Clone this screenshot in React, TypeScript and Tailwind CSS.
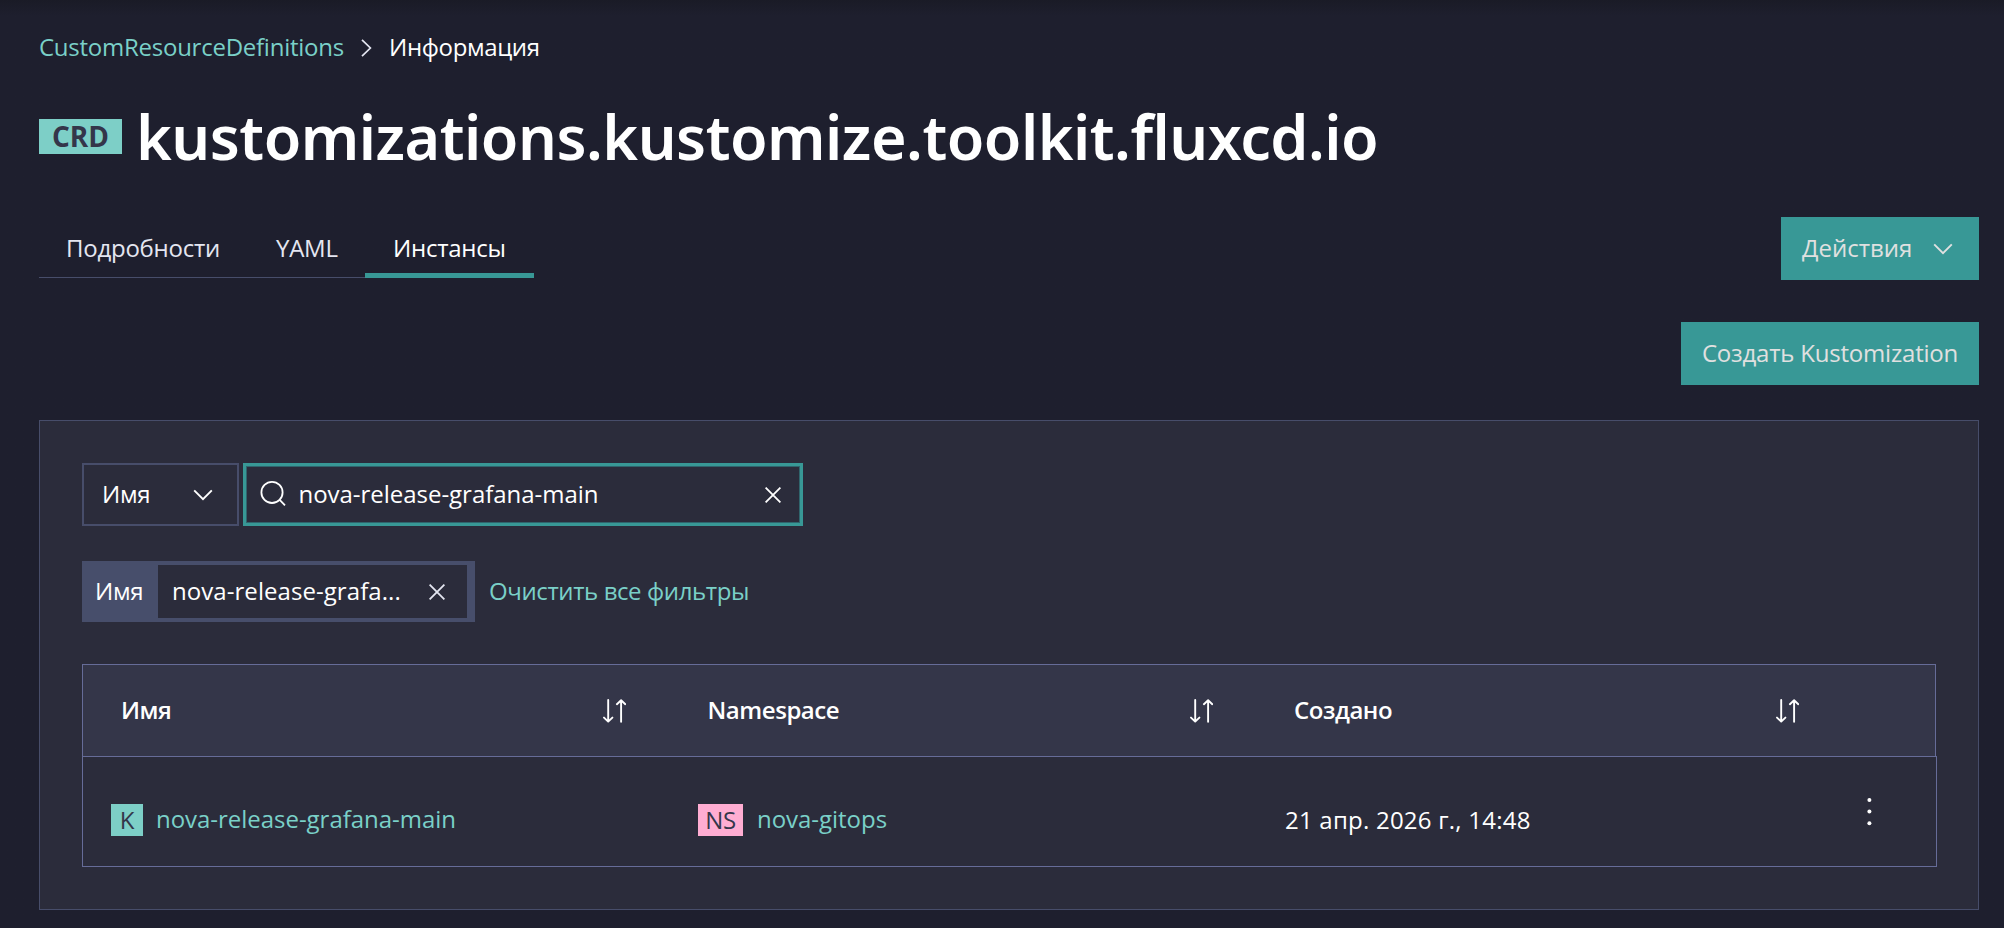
import type { ReactNode } from "react";

function Chevron({ className = "" }: { className?: string }) {
  return (
    <svg className={`shrink-0 ${className}`} width="20" height="12" viewBox="0 0 20 12" fill="none" stroke="currentColor" strokeWidth="1.9">
      <path d="M1.2 1.4 10 10.2 18.8 1.4" />
    </svg>
  );
}

function Close({ className = "" }: { className?: string }) {
  return (
    <svg className={`shrink-0 ${className}`} width="16" height="16" viewBox="0 0 16 16" fill="none" stroke="currentColor" strokeWidth="1.8">
      <path d="M.6.6 15.4 15.4M15.4.6.6 15.4" />
    </svg>
  );
}

function SortIcon() {
  return (
    <svg className="mt-px shrink-0" width="23" height="24" viewBox="0 0 23 24" fill="none" stroke="currentColor" strokeWidth="1.9" strokeLinecap="round" strokeLinejoin="round">
      <path d="M5.2 1V22.4M1 18.6 5.2 22.6 9.4 18.6" />
      <path d="M18.1 22.8V1.4M13.9 5.2 18.1 1.2 22.3 5.2" />
    </svg>
  );
}

function HeaderCell({ children }: { children: ReactNode }) {
  return (
    <div className="flex w-[586.5px] items-center justify-between pr-[43.5px] pb-px pl-[38px]">
      <span className="h-8 font-semibold leading-8 tracking-[-0.45px]">{children}</span>
      <SortIcon />
    </div>
  );
}

export default function App() {
  return (
    <div className="h-[928px] w-[2004px] overflow-hidden bg-[#1e1f2e] bg-linear-to-b from-[#1a1b26] to-[#1e1f2e] to-[16px] pt-[31px] pr-[25px] pl-[39px] font-['Open_Sans','Noto_Sans',sans-serif] text-[24px] leading-8 tracking-[-0.25px] whitespace-nowrap text-white">
      <nav className="flex h-8">
        <a className="w-[322px] text-[#7ad0c8]">CustomResourceDefinitions</a>
        <svg className="mt-[8px] mr-[17px]" width="11" height="18" viewBox="0 0 11 18" fill="none" stroke="#e4e6f1" strokeWidth="1.7">
          <path d="M1 .8 9.4 9 1 17.2" />
        </svg>
        <span className="tracking-[-0.35px]">Информация</span>
      </nav>

      <header className="mt-[34px] flex h-20">
        <span className="mt-[22px] flex h-[35px] w-[83px] items-center justify-center bg-[#7dcfc7] pb-[2px] text-[28px] font-bold tracking-[0px] text-[#34364a]">CRD</span>
        <h1 className="ml-[14px] font-['Noto_Sans',sans-serif] text-[61px] leading-[80px] font-semibold tracking-[-0.5px]">
          kustomizations.kustomize.toolkit.fluxcd.io
        </h1>
      </header>

      <div className="mt-[40px] flex h-[63px] justify-between">
        <div className="flex h-[61px] text-[#e4e6f1]">
          <span className="w-[209px] border-b border-[#474d6a] pt-[15px] pl-[27px]">Подробности</span>
          <span className="w-[117px] border-b border-[#474d6a] pt-[15px] pl-[28px]">YAML</span>
          <span className="w-[169px] border-b-5 border-[#389896] pt-[15px] pl-[28px] text-white">Инстансы</span>
        </div>
        <button className="flex w-[198px] items-start bg-[#389896] pt-[15px] pl-[21px] text-[#e0e0e0]">
          <span className="w-[131px] text-left tracking-[0px]">Действия</span>
          <Chevron className="mt-[11px]" />
        </button>
      </div>

      <div className="mt-[42px] flex h-[63px] justify-end">
        <button className="w-[298px] bg-[#389896] pb-[1px] text-center tracking-[-0.2px] text-[#e0e0e0]">Создать Kustomization</button>
      </div>

      <main className="mt-[35px] h-[490px] border border-[#474d6a] bg-[#2b2c3b] px-[42px] pt-[42px]">
        <div className="flex h-[63px] gap-1">
          <div className="flex w-[157px] border-2 border-[#474d6a] pt-[13px] pl-[18px]">
            <span className="w-[91px]">Имя</span>
            <Chevron className="mt-[11px]" />
          </div>
          <div className="flex w-[560px] border-3 border-[#389896] shadow-[inset_0_0_0_1px_#30656d]">
            <svg className="mt-[14px] ml-[13.5px] shrink-0" width="27" height="27" viewBox="0 0 27 27" fill="none" stroke="currentColor" strokeWidth="1.8">
              <circle cx="12" cy="12.4" r="10.6" />
              <path d="M19.2 19.4 25 25.4" />
            </svg>
            <span className="mt-[12px] ml-[12px] w-[466.5px] tracking-[-0.03px]">nova-release-grafana-main</span>
            <Close className="mt-[21px] text-white" />
          </div>
        </div>

        <div className="mt-[35px] flex h-[61px]">
          <div className="flex w-[393px] bg-[#474e6b] py-1 pr-2">
            <span className="w-[76px] pt-[10px] pl-[13px]">Имя</span>
            <div className="flex flex-1 bg-[#2b2c3b] pl-[14px]">
              <span className="w-[257px] pt-[10px] tracking-[0.06px]">nova-release-grafa...</span>
              <Close className="mt-[19px] text-[#e4e6f1]" />
            </div>
          </div>
          <a className="pt-[14px] pl-[14px] tracking-[-0.4px] text-[#7ad0c8]">Очистить все фильтры</a>
        </div>

        <section className="mt-[42px]">
          <div className="flex h-[92px] w-[1854px] border border-b-0 border-[#666c98] bg-[#343649]">
            <HeaderCell>Имя</HeaderCell>
            <HeaderCell>Namespace</HeaderCell>
            <HeaderCell>Создано</HeaderCell>
          </div>
          <div className="flex h-[111px] w-[1855px] border border-[#666c98]">
            <div className="flex w-[587px] pt-[47px] pl-[28px]">
              <span className="flex h-8 w-8 items-center justify-center bg-[#7dcfc7] text-[#34364a]">K</span>
              <a className="-mt-px ml-[13px] tracking-[-0.03px] text-[#7ad0c8]">nova-release-grafana-main</a>
            </div>
            <div className="flex w-[587px] pt-[47px] pl-[28px]">
              <span className="flex h-8 w-[45px] items-center justify-center bg-[#ffadd2] text-[#34364a]">NS</span>
              <a className="-mt-px ml-[14px] tracking-[-0.03px] text-[#7ad0c8]">nova-gitops</a>
            </div>
            <div className="w-[604px] pt-[47px] pl-[28px] tracking-[0.23px]">21 апр. 2026 г., 14:48</div>
            <svg className="mt-[39px]" width="16" height="32" viewBox="0 0 16 32" fill="white">
              <circle cx="8.4" cy="4" r="2" />
              <circle cx="8.4" cy="15.6" r="2" />
              <circle cx="8.4" cy="27.3" r="2" />
            </svg>
          </div>
        </section>
      </main>
    </div>
  );
}
